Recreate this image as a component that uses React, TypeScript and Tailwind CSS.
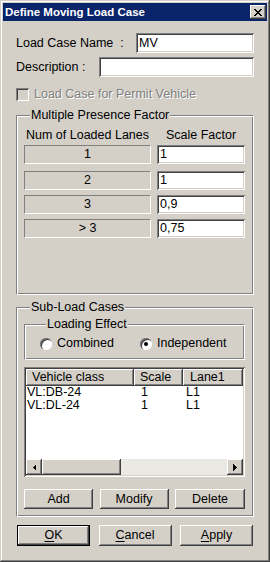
import React from "react";

const raised =
  "shadow-[inset_-1px_-1px_0_#404040,inset_1px_1px_0_#ffffff,inset_-2px_-2px_0_#808080,inset_2px_2px_0_#d4d0c8]";
const sunken =
  "shadow-[inset_1px_1px_0_#808080,inset_-1px_-1px_0_#ffffff,inset_2px_2px_0_#404040,inset_-2px_-2px_0_#d4d0c8]";
const etched =
  "border border-t-[#808080] border-l-[#808080] border-r-white border-b-white shadow-[inset_1px_1px_0_#ffffff,inset_-1px_-1px_0_#808080]";

function Field({ value, className = "" }: { value: string; className?: string }) {
  return (
    <div className={`bg-white ${sunken} h-[20px] flex items-center pl-[3px] leading-[15px] ${className}`}>
      {value}
    </div>
  );
}

function Button({ label, u, className = "", def = false }: { label: string; u?: number; className?: string; def?: boolean }) {
  const text =
    u === undefined ? (
      label
    ) : (
      <>
        {label.slice(0, u)}
        <span className="underline underline-offset-2">{label[u]}</span>
        {label.slice(u + 1)}
      </>
    );
  if (def) {
    return (
      <div className={`border border-black ${className}`}>
        <div className={`h-full w-full ${raised} flex items-center justify-center leading-[15px]`}>{text}</div>
      </div>
    );
  }
  return (
    <div className={`${raised} flex items-center justify-center leading-[15px] ${className}`}>{text}</div>
  );
}

function Radio({ checked }: { checked?: boolean }) {
  return (
    <div className="w-[12px] h-[12px] rounded-full bg-white shadow-[inset_1px_1px_0_#808080,inset_2px_2px_0_#404040,inset_-1px_-1px_0_#ffffff] flex items-center justify-center">
      {checked && <div className="w-[4px] h-[4px] rounded-full bg-black" />}
    </div>
  );
}

function Arrow({ dir }: { dir: "left" | "right" }) {
  return (
    <svg width="4" height="7" viewBox="0 0 4 7" shapeRendering="crispEdges">
      {dir === "left" ? <polygon points="4,0 4,7 0.5,3.5" fill="#000" /> : <polygon points="0,0 0,7 3.5,3.5" fill="#000" />}
    </svg>
  );
}

export default function App() {
  const rows = [
    ["1", "1"],
    ["2", "1"],
    ["3", "0,9"],
    ["> 3", "0,75"],
  ];
  return (
    <div className="w-[270px] h-[562px] bg-[#d4d0c8] flex flex-col text-black text-[12.5px] font-['Liberation_Sans',Arial,sans-serif] shadow-[inset_-1px_-1px_0_#404040,inset_1px_1px_0_#d4d0c8,inset_-2px_-2px_0_#808080,inset_2px_2px_0_#ffffff]">
      {/* title bar */}
      <div className="mx-[3px] mt-[3px] h-[18px] bg-[#0a246a] flex items-center pl-[2px] pr-[1px]">
        <span className="text-white font-bold text-[11.5px] leading-[14px]">Define Moving Load Case</span>
        <div className={`ml-auto w-[16px] h-[14px] bg-[#d4d0c8] ${raised} flex items-center justify-center`}>
          <svg width="8" height="7" viewBox="0 0 8 7" shapeRendering="crispEdges">
            <g fill="#000">
              <rect x="0" y="0" width="2" height="1" />
              <rect x="6" y="0" width="2" height="1" />
              <rect x="1" y="1" width="2" height="1" />
              <rect x="5" y="1" width="2" height="1" />
              <rect x="2" y="2" width="4" height="1" />
              <rect x="3" y="3" width="2" height="1" />
              <rect x="2" y="4" width="4" height="1" />
              <rect x="1" y="5" width="2" height="1" />
              <rect x="5" y="5" width="2" height="1" />
              <rect x="0" y="6" width="2" height="1" />
              <rect x="6" y="6" width="2" height="1" />
            </g>
          </svg>
        </div>
      </div>

      <div className="px-[16px] flex flex-col">
        <div className="mt-[12px] flex items-center h-[20px]">
          <span className="whitespace-pre leading-[15px]">Load Case Name  :</span>
          <Field value="MV" className="ml-auto w-[118px]" />
        </div>
        <div className="mt-[4px] flex items-center h-[20px]">
          <span className="whitespace-pre leading-[15px]">Description :</span>
          <Field value="" className="ml-auto w-[155px]" />
        </div>
        <div className="mt-[11px] flex items-center h-[13px]">
          <div className={`w-[13px] h-[13px] bg-[#d4d0c8] ${sunken}`} />
          <span className="ml-[5px] leading-[15px] text-[#808080] [text-shadow:1px_1px_0_#ffffff]">
            Load Case for Permit Vehicle
          </span>
        </div>

        {/* Multiple Presence Factor */}
        <fieldset className={`mt-[7px] h-[187px] ${etched} pl-[7px] pr-[8px] pt-[5px]`}>
          <legend className="ml-[6px] px-[1px] leading-[15px] bg-[#d4d0c8]">Multiple Presence Factor</legend>
          <div className="grid grid-cols-[127px_88px] gap-x-[6px] leading-[15px]">
            <div className="text-center">Num of Loaded Lanes</div>
            <div className="text-center">Scale Factor</div>
          </div>
          <div className="mt-[2px] flex flex-col">
            {rows.map(([a, b], i) => (
              <div
                key={i}
                className={`grid grid-cols-[127px_88px] gap-x-[6px] ${i === 0 ? "" : i === 1 ? "mt-[7px]" : "mt-[5px]"}`}
              >
                <div className="h-[19px] border border-t-[#808080] border-l-[#808080] border-r-white border-b-white flex items-center justify-center leading-[15px] whitespace-pre">
                  {a}
                </div>
                <Field value={b} className="!h-[19px]" />
              </div>
            ))}
          </div>
        </fieldset>

        {/* Sub-Load Cases */}
        <fieldset className={`mt-[5px] h-[217px] ${etched} pl-[7px] pr-[8px]`}>
          <legend className="ml-[6px] px-[1px] leading-[15px] bg-[#d4d0c8]">Sub-Load Cases</legend>
          <fieldset className={`mt-[2px] h-[43px] ${etched} pl-[15px]`}>
            <legend className="ml-[6px] px-[1px] leading-[15px] bg-[#d4d0c8]">Loading Effect</legend>
            <div className="mt-[5px] flex items-center h-[13px] leading-[15px]">
              <Radio />
              <span className="ml-[5px]">Combined</span>
              <div className="ml-[26px]">
                <Radio checked />
              </div>
              <span className="ml-[5px]">Independent</span>
            </div>
          </fieldset>

          {/* list view */}
          <div className={`mt-[7px] h-[110px] bg-white ${sunken} p-[2px] flex flex-col`}>
            <div className="flex h-[17px] bg-[#d4d0c8] leading-[15px]">
              <div className={`w-[108px] ${raised} flex items-center pl-[6px]`}>Vehicle class</div>
              <div className={`w-[49px] ${raised} flex items-center pl-[6px]`}>Scale</div>
              <div className={`w-[60px] ${raised} flex items-center pl-[7px]`}>Lane1</div>
            </div>
            <div className="flex-1 flex flex-col leading-[13px]">
              {[
                ["VL:DB-24", "1", "L1"],
                ["VL:DL-24", "1", "L1"],
              ].map((r, i) => (
                <div key={i} className="flex h-[13px]">
                  <div className="w-[108px] pl-[1px]">{r[0]}</div>
                  <div className="w-[49px] pl-[7px]">{r[1]}</div>
                  <div className="w-[60px] pl-[3px]">{r[2]}</div>
                </div>
              ))}
            </div>
            <div className="flex h-[16px] bg-[#ebe9e4]">
              <div className={`w-[16px] bg-[#d4d0c8] ${raised} flex items-center justify-center`}>
                <Arrow dir="left" />
              </div>
              <div className={`w-[79px] bg-[#d4d0c8] ${raised}`} />
              <div className="flex-1" />
              <div className={`w-[16px] bg-[#d4d0c8] ${raised} flex items-center justify-center`}>
                <Arrow dir="right" />
              </div>
            </div>
          </div>

          <div className="mt-[12px] grid grid-cols-[69px_69px_70px] gap-x-[6px] justify-between">
            <Button label="Add" className="h-[20px]" />
            <Button label="Modify" className="h-[20px]" />
            <Button label="Delete" className="h-[20px]" />
          </div>
        </fieldset>
      </div>

      <div className="mt-[8px] px-[17px] flex justify-between">
        <Button label="OK" u={0} def className="w-[73px] h-[21px]" />
        <Button label="Cancel" u={0} className="w-[73px] h-[21px]" />
        <Button label="Apply" u={0} className="w-[73px] h-[21px]" />
      </div>
    </div>
  );
}
